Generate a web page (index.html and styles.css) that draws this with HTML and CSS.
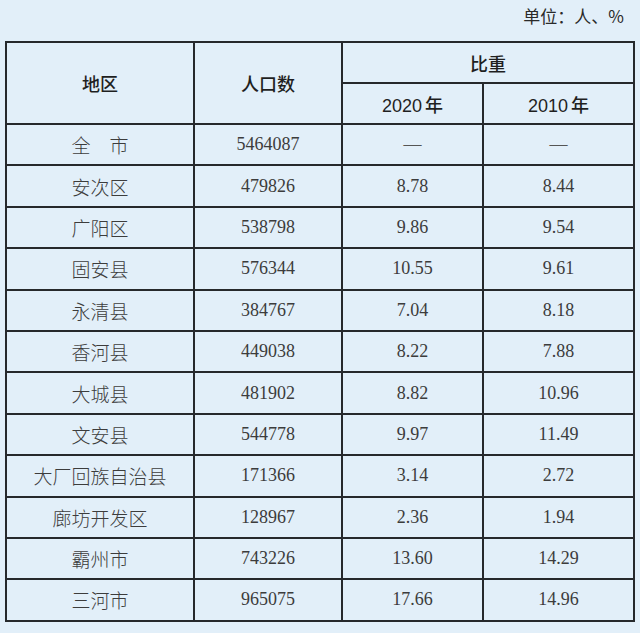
FILE: index.html
```html
<!DOCTYPE html>
<html lang="zh-CN">
<head>
<meta charset="utf-8">
<title>人口数</title>
<link rel="stylesheet" href="styles.css">
</head>
<body>
<div class="page">
  <div class="unit">单位：人、%</div>
  <table class="data">
    <colgroup>
      <col class="c1"><col class="c2"><col class="c3"><col class="c4">
    </colgroup>
    <thead>
      <tr class="h1">
        <th rowspan="2">地区</th>
        <th rowspan="2">人口数</th>
        <th colspan="2">比重</th>
      </tr>
      <tr class="h2">
        <th><span class="yr">2020</span>年</th>
        <th><span class="yr">2010</span>年</th>
      </tr>
    </thead>
    <tbody>
      <tr><td class="name">全　市</td><td class="num">5464087</td><td class="num dash">—</td><td class="num dash">—</td></tr>
      <tr><td class="name">安次区</td><td class="num">479826</td><td class="num">8.78</td><td class="num">8.44</td></tr>
      <tr><td class="name">广阳区</td><td class="num">538798</td><td class="num">9.86</td><td class="num">9.54</td></tr>
      <tr><td class="name">固安县</td><td class="num">576344</td><td class="num">10.55</td><td class="num">9.61</td></tr>
      <tr><td class="name">永清县</td><td class="num">384767</td><td class="num">7.04</td><td class="num">8.18</td></tr>
      <tr><td class="name">香河县</td><td class="num">449038</td><td class="num">8.22</td><td class="num">7.88</td></tr>
      <tr><td class="name">大城县</td><td class="num">481902</td><td class="num">8.82</td><td class="num">10.96</td></tr>
      <tr><td class="name">文安县</td><td class="num">544778</td><td class="num">9.97</td><td class="num">11.49</td></tr>
      <tr><td class="name">大厂回族自治县</td><td class="num">171366</td><td class="num">3.14</td><td class="num">2.72</td></tr>
      <tr><td class="name">廊坊开发区</td><td class="num">128967</td><td class="num">2.36</td><td class="num">1.94</td></tr>
      <tr><td class="name">霸州市</td><td class="num">743226</td><td class="num">13.60</td><td class="num">14.29</td></tr>
      <tr><td class="name">三河市</td><td class="num">965075</td><td class="num">17.66</td><td class="num">14.96</td></tr>
    </tbody>
  </table>
</div>
</body>
</html>
```
FILE: styles.css
```css
html, body {
  margin: 0;
  padding: 0;
  background: #e2eff9;
}
.page {
  width: 640px;
  height: 633px;
  padding: 5px 0 0 5px;
  box-sizing: border-box;
  background: #e2eff9;
  font-family: "Noto Sans CJK SC", "Noto Sans", sans-serif;
}
.unit {
  height: 25px;
  line-height: 22px;
  text-align: right;
  padding-right: 16px;
  font-size: 17px;
  color: #2a2a2a;
  margin-bottom: 11px;
}
.data {
  border-collapse: collapse;
  table-layout: fixed;
  width: 628px;
}
.c1 { width: 188px; }
.c2 { width: 148px; }
.c3 { width: 141px; }
.c4 { width: 151px; }
.data th, .data td {
  border: 2px solid #26292c;
  padding: 0;
  text-align: center;
  vertical-align: middle;
}
.data th {
  font-size: 18px;
  font-weight: 500;
  color: #1f1f1f;
  height: 39px;
}
.data .yr {
  font-family: "Liberation Sans", Arial, sans-serif;
  font-weight: 400;
  margin-right: 3px;
}
.data td {
  height: 39.4px;
  color: #3c3c3c;
}
.data .name {
  font-size: 19px;
  font-weight: 300;
  font-family: "Noto Sans CJK SC", sans-serif;
}
.data .num {
  font-family: "Liberation Serif", "Times New Roman", serif;
  font-size: 18px;
}
.data .dash {
  font-size: 18px;
  color: #555;
}
```
